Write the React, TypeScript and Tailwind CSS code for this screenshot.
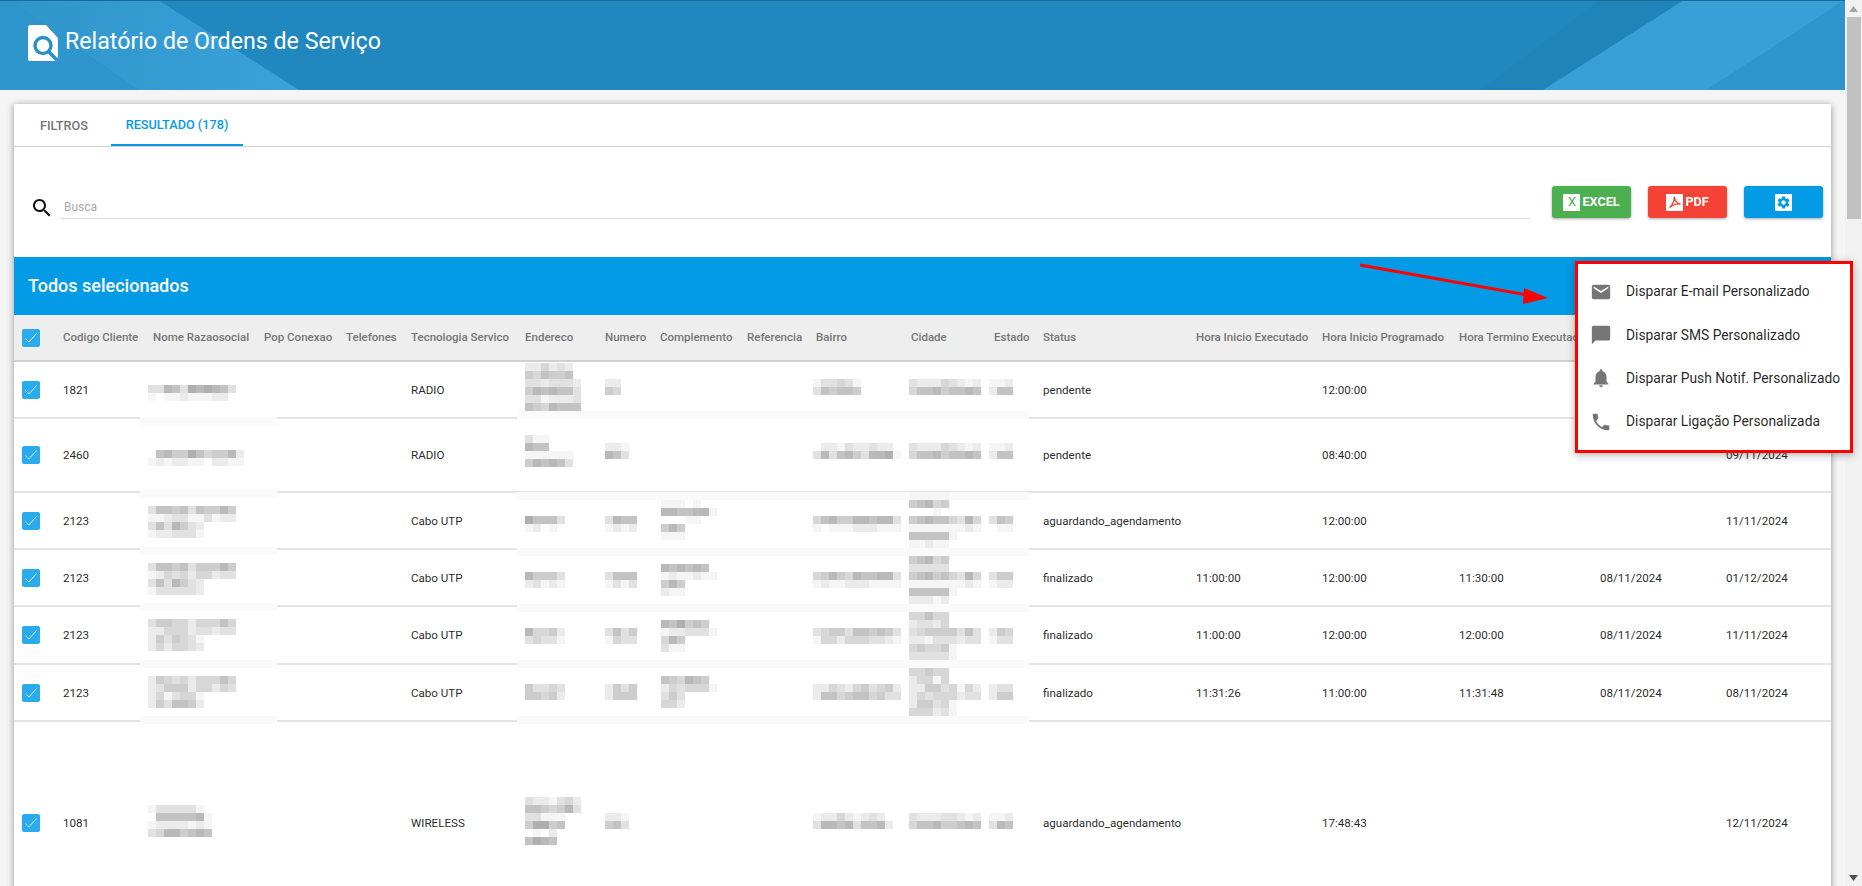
const COLS = [
  { key: "check", x: 14, w: "w-[49px]", label: "" },
  { key: "code", x: 63, w: "w-[90px]", label: "Codigo Cliente" },
  { key: "name", x: 153, w: "w-[111px]", label: "Nome Razaosocial" },
  { key: "pop", x: 264, w: "w-[82px]", label: "Pop Conexao" },
  { key: "tel", x: 346, w: "w-[65px]", label: "Telefones" },
  { key: "tech", x: 411, w: "w-[114px]", label: "Tecnologia Servico" },
  { key: "end", x: 525, w: "w-[80px]", label: "Endereco" },
  { key: "num", x: 605, w: "w-[55px]", label: "Numero" },
  { key: "comp", x: 660, w: "w-[87px]", label: "Complemento" },
  { key: "ref", x: 747, w: "w-[69px]", label: "Referencia" },
  { key: "bairro", x: 816, w: "w-[95px]", label: "Bairro" },
  { key: "cidade", x: 911, w: "w-[83px]", label: "Cidade" },
  { key: "estado", x: 994, w: "w-[49px]", label: "Estado" },
  { key: "status", x: 1043, w: "w-[153px]", label: "Status" },
  { key: "hie", x: 1196, w: "w-[126px]", label: "Hora Inicio Executado" },
  { key: "hip", x: 1322, w: "w-[137px]", label: "Hora Inicio Programado" },
  { key: "hte", x: 1459, w: "w-[141px]", label: "Hora Termino Executado" },
  { key: "d1", x: 1600, w: "w-[126px]", label: "" },
  { key: "d2", x: 1726, w: "w-[105px]", label: "" },
];

// blurred cells: start x per column, each digit is a grey level
const MARK_X: Record<string, number> = { name: 148, end: 525, num: 605, comp: 661, bairro: 813, cidade: 909, estado: 989 };

type Row = {
  top: number;
  h: string;
  text: Record<string, string>;
  marks: Record<string, [number, string[]]>;
};

const ROWS: Row[] = [
  {
    top: 362,
    h: "h-[57px]",
    text: { code: "1821", tech: "RADIO", status: "pendente", hip: "12:00:00" },
    marks: {
      name: [385, ["33763878763", "10112111220"]],
      end: [363, ["224232", "546556", "3323332", "5767663", "3312223", "6547666"]],
      num: [379, ["22", "54"]],
      bairro: [379, ["133431", "365665"]],
      cidade: [379, ["322243212", "466756676"]],
      estado: [379, ["112", "266"]],
    },
  },
  {
    top: 419,
    h: "h-[74px]",
    text: { code: "2460", tech: "RADIO", status: "pendente", hip: "08:40:00", d2: "09/11/2024" },
    marks: {
      name: [450, ["067558645572", "121221102211"]],
      end: [435, ["311", "766", "111111", "576763"]],
      num: [443, ["221", "763"]],
      bairro: [443, ["02213223220", "37367537781"]],
      cidade: [443, ["322243212", "466756676"]],
      estado: [443, ["112", "266"]],
    },
  },
  {
    top: 493,
    h: "h-[57px]",
    text: { code: "2123", tech: "Cabo UTP", status: "aguardando_agendamento", hip: "12:00:00", d2: "11/11/2024" },
    marks: {
      name: [506, ["36656365575", "11233113122", "3637532", "1223331"]],
      end: [516, ["86663", "12010"]],
      num: [516, ["3766", "1212"]],
      comp: [500, ["111010", "7766771", "0001100", "575", "111"]],
      bairro: [516, ["46755776773", "10111222111"]],
      cidade: [492, ["11111", "56745", "00010", "567664374", "111111121", "666661", "112110"]],
      estado: [516, ["365", "011"]],
    },
  },
  {
    top: 550,
    h: "h-[57px]",
    text: { code: "2123", tech: "Cabo UTP", status: "finalizado", hie: "11:00:00", hip: "12:00:00", hte: "11:30:00", d1: "08/11/2024", d2: "01/12/2024" },
    marks: {
      name: [563, ["36656355575", "12434244233", "3637532", "1333332"]],
      end: [572, ["75553", "23121"]],
      num: [572, ["3666", "1313"]],
      comp: [564, ["7676760", "1211211", "575", "211"]],
      bairro: [572, ["45754766773", "12112221111"]],
      cidade: [556, ["56745", "33333", "567564374", "111111121", "666661", "222120"]],
      estado: [572, ["355", "122"]],
    },
  },
  {
    top: 607,
    h: "h-[58px]",
    text: { code: "2123", tech: "Cabo UTP", status: "finalizado", hie: "11:00:00", hip: "12:00:00", hte: "12:00:00", d1: "08/11/2024", d2: "11/11/2024" },
    marks: {
      name: [619, ["35544244464", "22444233233", "2535431", "2424432"]],
      end: [628, ["74452", "34331"]],
      num: [628, ["3635", "1433"]],
      comp: [620, ["7685650", "1223331", "475", "311"]],
      bairro: [628, ["34553665653", "14424443321"]],
      cidade: [612, ["44644", "23324", "345555363", "221333233", "454451", "333331"]],
      estado: [628, ["254", "133"]],
    },
  },
  {
    top: 665,
    h: "h-[57px]",
    text: { code: "2123", tech: "Cabo UTP", status: "finalizado", hie: "11:31:26", hip: "11:00:00", hte: "11:31:48", d1: "08/11/2024", d2: "08/11/2024" },
    marks: {
      name: [676, ["25434244464", "23555244243", "2413441", "2536652"]],
      end: [684, ["53343", "55452"]],
      num: [684, ["2535", "2555"]],
      comp: [676, ["654765", "2434441", "353", "442"]],
      bairro: [684, ["22432453452", "26645664533"]],
      cidade: [668, ["44544", "24414", "225534142", "243444233", "255341", "444231"]],
      estado: [684, ["233", "255"]],
    },
  },
  {
    top: 722,
    h: "h-[204px]",
    text: { code: "1081", tech: "WIRELESS", status: "aguardando_agendamento", hip: "17:48:43", d2: "12/11/2024" },
    marks: {
      name: [805, ["1333331", "06666671", "12222121", "34775676"]],
      end: [797, ["3221342", "6654573", "33111", "58856", "0102", "6876"]],
      num: [813, ["221", "563"]],
      bairro: [813, ["122421232", "3776736672"]],
      cidade: [813, ["322233212", "466755676"]],
      estado: [813, ["112", "376"]],
    },
  },
];

// the faint strips left over by the blur, on top of the row lines
const BANDS = [
  [140, 277, 417], [517, 1029, 411],
  [140, 277, 490], [517, 1029, 492],
  [140, 277, 547], [517, 1029, 548],
  [140, 277, 603], [517, 1029, 604],
  [140, 277, 660], [517, 1029, 660],
  [140, 277, 716], [517, 1029, 716],
];

const Mosaic = ({ rows, left, top }: { rows: string[]; left: number; top: number }) => {
  const cells = Math.max(...rows.map((r) => r.length));
  return (
    <svg
      width={cells * 8}
      height={rows.length * 8}
      className="relative z-10 block"
      style={{ marginLeft: left, marginTop: top }}
    >
      {rows.map((r, y) =>
        r.split("").map((c, x) => {
          const v = 255 - Number(c) * 10;
          return <rect key={x} x={x * 8} y={y * 8} width="8" height="8" fill={`rgb(${v},${v},${v})`} />;
        })
      )}
    </svg>
  );
};

const CheckBox = () => (
  <div className="ml-2 flex h-[18px] w-[18px] items-center justify-center rounded-[2px] bg-[#29abec]">
    <svg width="14" height="14" viewBox="0 0 14 14" fill="none">
      <path d="M1.5 7.5 L5 11 L12.5 2.5" stroke="#d8f0fc" strokeWidth="1" />
    </svg>
  </div>
);

const MenuIcon = ({ d }: { d: string }) => (
  <svg width="22" height="22" viewBox="0 0 24 24" fill="#757575" className="shrink-0">
    <path d={d} />
  </svg>
);

const MENU = [
  {
    label: "Disparar E-mail Personalizado",
    d: "M20 4H4c-1.1 0-1.99.9-1.99 2L2 18c0 1.1.9 2 2 2h16c1.1 0 2-.9 2-2V6c0-1.1-.9-2-2-2zm0 4l-8 5-8-5V6l8 5 8-5v2z",
  },
  {
    label: "Disparar SMS Personalizado",
    d: "M20 2H4c-1.1 0-1.99.9-1.99 2L2 22l4-4h14c1.1 0 2-.9 2-2V4c0-1.1-.9-2-2-2z",
  },
  {
    label: "Disparar Push Notif. Personalizado",
    d: "M12 22c1.1 0 2-.9 2-2h-4c0 1.1.89 2 2 2zm6-6v-5c0-3.07-1.64-5.64-4.5-6.32V4c0-.83-.67-1.5-1.5-1.5s-1.5.67-1.5 1.5v.68C7.63 5.36 6 7.92 6 11v5l-2 2v1h16v-1l-2-2z",
  },
  {
    label: "Disparar Ligação Personalizada",
    d: "M6.62 10.79c1.44 2.83 3.76 5.14 6.59 6.59l2.2-2.2c.27-.27.67-.36 1.02-.24 1.12.37 2.33.57 3.57.57.55 0 1 .45 1 1V20c0 .55-.45 1-1 1-9.39 0-17-7.61-17-17 0-.55.45-1 1-1h3.5c.55 0 1 .45 1 1 0 1.25.2 2.45.57 3.57.11.35.03.74-.25 1.02l-2.2 2.2z",
  },
];

const Logo = () => (
  <svg width="30" height="36" viewBox="0 0 30 36" className="shrink-0">
    <path d="M2 0H18L30 13V33L28 36H2C1 36 0 35 0 34V2C0 1 1 0 2 0Z" fill="#fff" />
    <circle cx="15" cy="20.5" r="8" fill="none" stroke="#2a8fc5" strokeWidth="3.4" />
    <path d="M20.5 26.5L29 35" stroke="#2a8fc5" strokeWidth="3.6" />
  </svg>
);

const Banner = () => (
  <svg className="absolute inset-0" width="1845" height="90" viewBox="0 0 1845 90">
    <defs>
      <linearGradient id="band" x1="0" y1="0" x2="1" y2="0">
        <stop offset="0" stopColor="#2f95cb" />
        <stop offset="1" stopColor="#3aa2d9" />
      </linearGradient>
    </defs>
    <rect width="1845" height="90" fill="#2088bf" />
    <polygon points="0,0 8,0 138,90 0,90" fill="#2f96cd" />
    <polygon points="8,0 158,0 299,90 138,90" fill="url(#band)" />
    <polygon points="1600,0 1684,0 1543,90 1480,90" fill="#1f85b9" />
    <polygon points="1684,0 1845,0 1707,90 1543,90" fill="#38a0d7" />
    <polygon points="1845,0 1845,90 1707,90" fill="#2f96cd" />
    <rect width="1845" height="1" fill="#1a6996" />
  </svg>
);

const Scrollbar = () => (
  <div className="flex h-full w-[17px] shrink-0 flex-col items-center bg-[#f1f1f1]">
    <div className="flex h-[17px] items-center justify-center">
      <svg width="9" height="6" viewBox="0 0 9 6"><path d="M4.5 0L9 6H0Z" fill="#a3a3a3" /></svg>
    </div>
    <div className="h-[202px] w-[14px] bg-[#c1c1c1]" />
    <div className="flex-1" />
    <div className="flex h-[17px] items-center justify-center">
      <svg width="9" height="6" viewBox="0 0 9 6"><path d="M0 0H9L4.5 6Z" fill="#505050" /></svg>
    </div>
  </div>
);

export default function App() {
  return (
    <div className="relative flex h-[886px] w-full overflow-hidden font-['Roboto',sans-serif]">
      <div className="min-w-0 flex-1 overflow-hidden bg-[#f5f5f5]">
        <header className="relative h-[90px]">
          <Banner />
          <div className="relative flex items-start pl-[28px] pt-[25px]">
            <Logo />
            <h1 className="ml-[7px] text-[23.2px] leading-[32px] text-white">Relatório de Ordens de Serviço</h1>
          </div>
        </header>

        <div className="relative mx-[14px] mt-[14px] bg-white shadow-[0_1px_7px_rgba(0,0,0,0.4)]">
          <div className="flex h-[43px] border-b border-[#d0d0d0] pt-[2px] text-[12.7px] font-medium">
            <div className="flex w-[97px] items-center justify-center pl-[3px] text-[#757575]">FILTROS</div>
            <div className="flex w-[132px] items-center justify-center border-b-2 border-[#039be5] text-[#039be5]">
              RESULTADO (178)
            </div>
          </div>

          <div className="flex h-[110px] items-end pb-[39px] pl-[15px] pr-[8px]">
            <svg width="24" height="24" viewBox="0 0 24 24" className="mb-[-2px] ml-[1px] shrink-0" fill="#111">
              <path d="M15.5 14h-.79l-.28-.27C15.41 12.59 16 11.11 16 9.5 16 5.91 13.09 3 9.5 3S3 5.91 3 9.5 5.91 16 9.5 16c1.61 0 3.09-.59 4.23-1.57l.27.28v.79l5 4.99L20.49 19l-4.99-5zm-6 0C7.01 14 5 11.99 5 9.5S7.01 5 9.5 5 14 7.01 14 9.5 11.99 14 9.5 14z" />
            </svg>
            <div className="mb-[-1px] ml-[7px] flex h-[32px] flex-1 items-end border-b border-[#ddd] pb-[3px] pl-[3px] text-[12px] leading-[16px] text-[#a8a8a8]">
              Busca
            </div>
            <div className="ml-[22px] flex gap-[17px]">
              <button className="flex h-[32px] w-[79px] items-center justify-center rounded-[3px] bg-[#4caf50] text-[12.6px] font-bold text-white shadow-[0_1px_3px_rgba(0,0,0,0.35)]">
                <span className="mr-[2px] flex h-[17px] w-[17px] items-center justify-center bg-white text-[13px] font-normal text-[#4caf50]">X</span>
                EXCEL
              </button>
              <button className="flex h-[32px] w-[79px] items-center justify-center rounded-[3px] bg-[#f44336] text-[12.6px] font-bold text-white shadow-[0_1px_3px_rgba(0,0,0,0.35)]">
                <span className="mr-[2px] flex h-[17px] w-[17px] items-center justify-center bg-white">
                  <svg width="14" height="14" viewBox="0 0 14 14" fill="none" stroke="#f44336" strokeWidth="1.3">
                    <path d="M1.5 12.5C4 11 6.5 6 6.3 1.5C6.8 6 9 8.5 12.5 9C8.5 8.7 4.5 10 1.5 12.5Z" />
                  </svg>
                </span>
                PDF
              </button>
              <button className="flex h-[32px] w-[79px] items-center justify-center rounded-[3px] bg-[#039be5] shadow-[0_1px_3px_rgba(0,0,0,0.35)]">
                <span className="flex h-[17px] w-[17px] items-center justify-center rounded-[1px] bg-white">
                  <svg width="15" height="15" viewBox="0 0 24 24" fill="#039be5">
                    <path d="M19.14 12.94c.04-.3.06-.61.06-.94 0-.32-.02-.64-.07-.94l2.03-1.58c.18-.14.23-.41.12-.61l-1.92-3.32c-.12-.22-.37-.29-.59-.22l-2.39.96c-.5-.38-1.03-.7-1.62-.94l-.36-2.54c-.04-.24-.24-.41-.48-.41h-3.84c-.24 0-.43.17-.47.41l-.36 2.54c-.59.24-1.13.57-1.62.94l-2.39-.96c-.22-.08-.47 0-.59.22L2.74 8.87c-.12.21-.08.47.12.61l2.03 1.58c-.05.3-.09.63-.09.94s.02.64.07.94l-2.03 1.58c-.18.14-.23.41-.12.61l1.92 3.32c.12.22.37.29.59.22l2.39-.96c.5.38 1.03.7 1.62.94l.36 2.54c.05.24.24.41.48.41h3.84c.24 0 .44-.17.47-.41l.36-2.54c.59-.24 1.13-.56 1.62-.94l2.39.96c.22.08.47 0 .59-.22l1.92-3.32c.12-.22.07-.47-.12-.61l-2.01-1.58zM12 15.6c-1.98 0-3.6-1.62-3.6-3.6s1.62-3.6 3.6-3.6 3.6 1.62 3.6 3.6-1.62 3.6-3.6 3.6z" />
                  </svg>
                </span>
              </button>
            </div>
          </div>

          <div className="flex h-[58px] items-center bg-[#039be5] pb-[2px] pl-[14px] text-[18px] font-medium text-white">
            Todos selecionados
          </div>

          <div className="relative">
            <table className="w-full table-fixed border-separate border-spacing-0 text-[11.6px] text-[rgba(0,0,0,0.87)]">
              <colgroup>
                {COLS.map((c) => (
                  <col key={c.key} className={c.w} />
                ))}
              </colgroup>
              <thead>
                <tr>
                  {COLS.map((c) => (
                    <th
                      key={c.key}
                      className="h-[47px] whitespace-nowrap border-b-2 border-[#d0d0d0] bg-[#eeeeee] text-left text-[11.5px] font-medium text-[#757575]"
                    >
                      {c.key === "check" ? <CheckBox /> : c.label}
                    </th>
                  ))}
                </tr>
              </thead>
              <tbody>
                {ROWS.map((r, i) => (
                  <tr key={i}>
                    {COLS.map((c) => {
                      const mark = r.marks[c.key];
                      return (
                        <td
                          key={c.key}
                          className={`${r.h} whitespace-nowrap border-b-2 border-[#e4e4e4] ${mark ? "p-0 align-top" : c.key === "check" ? "p-0 align-middle" : "px-0 pb-0 pt-[2px] align-middle"}`}
                        >
                          {c.key === "check" ? (
                            <CheckBox />
                          ) : mark ? (
                            <Mosaic rows={mark[1]} left={MARK_X[c.key] - c.x} top={mark[0] - r.top} />
                          ) : (
                            r.text[c.key]
                          )}
                        </td>
                      );
                    })}
                  </tr>
                ))}
              </tbody>
            </table>
            {BANDS.map(([a, b, y]) => (
              <div
                key={`${a}-${y}`}
                className="absolute h-2 bg-[#fafafa]"
                style={{ left: a - 14, width: b - a, top: y - 315 }}
              />
            ))}
          </div>
        </div>
      </div>
      <Scrollbar />

      <svg className="absolute left-[1355px] top-[258px]" width="200" height="50" viewBox="0 0 200 50">
        <path d="M5 7L172 37" stroke="#f00" strokeWidth="3" />
        <polygon points="193,40 169,30 168,46" fill="#f00" />
      </svg>

      <div className="absolute left-[1575px] top-[261px] h-[192px] w-[278px] border-[3px] border-[#f00] bg-white py-[6px] pl-[12px] shadow-[0_2px_8px_rgba(0,0,0,0.3)]">
        {MENU.map((m) => (
          <div key={m.label} className="flex h-[43.3px] items-center text-[13.8px] text-[rgba(0,0,0,0.87)]">
            <MenuIcon d={m.d} />
            <span className="ml-[14px] whitespace-nowrap">{m.label}</span>
          </div>
        ))}
      </div>
    </div>
  );
}
